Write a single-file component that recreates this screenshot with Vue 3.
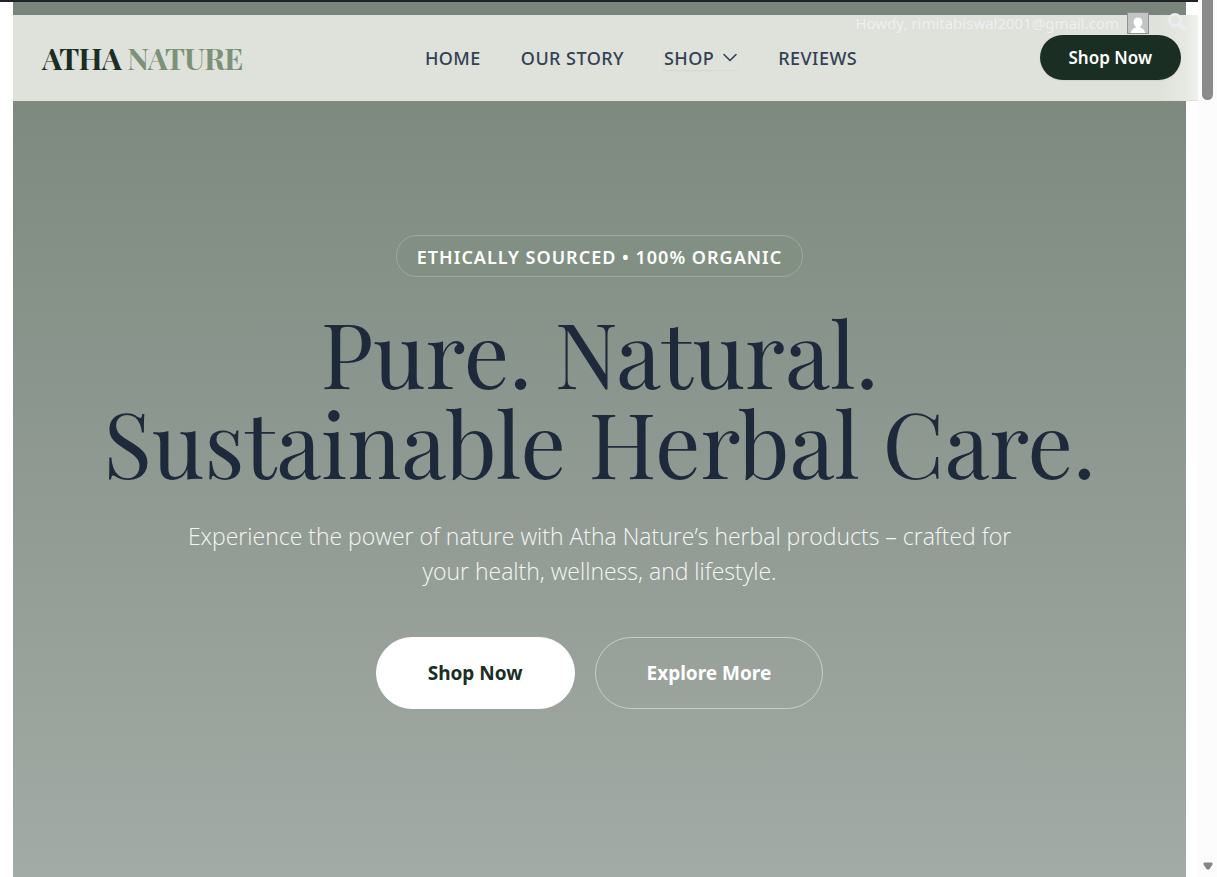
<script setup>
const email = 'rimitabiswal2001@gmail.com'
</script>

<template>
  <div class="window">
    <div class="page">
      <div class="admin-edge"></div>
      <div class="admin-bar">
        <a class="howdy" href="#profile">
          <span>Howdy, {{ email }}</span>
          <svg class="avatar" viewBox="0 0 22 22" aria-hidden="true">
            <rect x="0.5" y="0.5" width="21" height="21" fill="#c3c4c4" stroke="#8c8f94" />
            <path d="M11 5.500c-2.800 0-4.400 2-4.400 4.600 0 2 .8 3.700 2.200 4.700v.7c-2.700.7-4.500 2.500-5 5.500h14.400c-.5-3-2.300-4.800-5-5.500v-.7c1.400-1 2.200-2.700 2.200-4.700 0-2.600-1.600-4.600-4.400-4.600z" fill="#fff" />
          </svg>
        </a>
        <button class="search" type="button" aria-label="Search">
          <svg viewBox="0 0 20 20" aria-hidden="true">
            <circle cx="8" cy="7" r="5.500" fill="none" stroke="#e9edf0" stroke-width="3" />
            <path d="M12.500 11.500l5 4.500" stroke="#e9edf0" stroke-width="4.400" stroke-linecap="round" />
          </svg>
        </button>
      </div>

      <header class="site-header">
        <a class="logo" href="#home">ATHA <span>NATURE</span></a>
        <nav class="nav">
          <a href="#home">HOME</a>
          <a href="#story">OUR STORY</a>
          <button class="menu" type="button">
            SHOP
            <svg viewBox="0 0 16 16" aria-hidden="true">
              <path d="M2 4.500l6 6 6-6" fill="none" stroke="currentColor" stroke-width="1.600" stroke-linecap="round" stroke-linejoin="round" />
            </svg>
          </button>
          <a href="#reviews">REVIEWS</a>
        </nav>
        <a class="header-cta" href="#shop">Shop Now</a>
      </header>

      <main class="hero">
        <p class="badge">ETHICALLY SOURCED • 100% ORGANIC</p>
        <h1>Pure. Natural.<br />Sustainable Herbal Care.</h1>
        <p class="lead">
          Experience the power of nature with Atha Nature’s herbal products – crafted for
          your health, wellness, and lifestyle.
        </p>
        <div class="actions">
          <a class="primary" href="#shop">Shop Now</a>
          <a class="secondary" href="#more">Explore More</a>
        </div>
      </main>
    </div>

    <div class="scroll-track" aria-hidden="true">
      <div class="thumb"></div>
      <svg viewBox="0 0 10 8"><path d="M1 1h8v1.500L6 7H4L1 2.500z" fill="#858585" stroke="#858585" stroke-linejoin="round" /></svg>
    </div>
  </div>
</template>

<style>
body {
  margin: 0;
  background: #fff;
}
</style>

<style scoped>
.window {
  display: grid;
  grid-template-columns: minmax(0, 1fr) 19px;
  min-height: 100vh;
  font-family: "Segoe UI", "Noto Sans", "Open Sans", sans-serif;
}
.window a {
  text-decoration: none;
}
.page {
  position: relative;
  display: flex;
  flex-direction: column;
}
.admin-edge {
  height: 2px;
  background: #1d2327;
}
.admin-bar {
  position: absolute;
  z-index: 2;
  top: 11px;
  right: 11px;
  display: flex;
  align-items: center;
  gap: 18px;
}
.howdy {
  display: flex;
  align-items: center;
  gap: 8px;
  color: #eef0f1;
  font-size: 15px;
  line-height: 24px;
}
.avatar {
  width: 22px;
  height: 22px;
}
.search {
  display: flex;
  padding: 0;
  border: 0;
  background: none;
}
.search svg {
  width: 20px;
  height: 20px;
}
.site-header {
  position: absolute;
  z-index: 1;
  top: 15px;
  left: 13px;
  right: 0;
  display: flex;
  align-items: center;
  justify-content: space-between;
  box-sizing: border-box;
  height: 86px;
  padding: 0 17px 0 29px;
  border-bottom: 1px solid #e8dfcd;
  background: linear-gradient(90deg, #dfe1db calc(100% - 40px), #e6e8e2 calc(100% - 12px), #f1f2ed);
}
.logo {
  color: #1b2e24;
  font-family: "Playfair Display", "Liberation Serif", serif;
  font-size: 30px;
  font-weight: 700;
  line-height: 40px;
  letter-spacing: -0.025em;
}
.logo span {
  color: #7c9278;
}
.nav {
  display: flex;
  align-items: center;
  gap: 40px;
}
.nav a,
.menu {
  color: #334155;
  font-family: inherit;
  font-size: 18px;
  font-weight: 500;
  line-height: 24px;
  letter-spacing: 0.025em;
}
.menu {
  display: flex;
  align-items: center;
  gap: 8px;
  padding: 0;
  border: 0;
  border-radius: 4px;
  background: none;
  box-shadow: 0 1px 2px rgba(0, 0, 0, 0.05);
}
.menu svg {
  width: 16px;
  height: 16px;
}
.header-cta {
  padding: 10px 29px;
  border-radius: 23px;
  background: #1b2e24;
  box-shadow: 0 1px 2px rgba(0, 0, 0, 0.06);
  color: #fff;
  font-size: 17px;
  font-weight: 600;
  line-height: 25px;
}
.hero {
  flex: 1;
  display: flex;
  flex-direction: column;
  align-items: center;
  box-sizing: border-box;
  margin: 0 12px 0 13px;
  padding: 233px 20px 168px;
  background: linear-gradient(180deg, #79857b, #a2aba5);
  text-align: center;
}
.badge {
  margin: 0;
  padding: 9px 20px 7px;
  border: 1px solid #9caa9d;
  border-radius: 21px;
  background: #819082;
  color: #fff;
  font-size: 18px;
  font-weight: 600;
  line-height: 24px;
  letter-spacing: 1px;
}
h1 {
  margin: 30px 0 0;
  color: #1e293b;
  font-family: "Playfair Display", "Liberation Serif", serif;
  font-size: 90px;
  font-weight: 400;
  line-height: 90px;
}
.lead {
  max-width: 860px;
  margin: 32px 0 0;
  color: #f4f6f4;
  font-family: "Segoe UI", "Open Sans", "Noto Sans", sans-serif;
  font-size: 23px;
  font-weight: 300;
  line-height: 35px;
}
.actions {
  display: flex;
  gap: 20px;
  margin-top: 48px;
}
.actions a {
  box-sizing: border-box;
  padding: 20px 51px;
  border: 1px solid #fff;
  border-radius: 36px;
  font-size: 19px;
  font-weight: 700;
  line-height: 30px;
}
.actions .primary {
  background: #fff;
  color: #1b2e24;
}
.actions .secondary {
  border-color: #c8cecb;
  color: #fff;
}
.scroll-track {
  display: flex;
  flex-direction: column;
  align-items: center;
  justify-content: space-between;
  padding-bottom: 7px;
  background: #fcfcfc;
}
.thumb {
  width: 11px;
  height: 100px;
  border-radius: 0 0 6px 6px;
  background: #8b8b8b;
}
.scroll-track svg {
  width: 10px;
  height: 8px;
}
</style>
